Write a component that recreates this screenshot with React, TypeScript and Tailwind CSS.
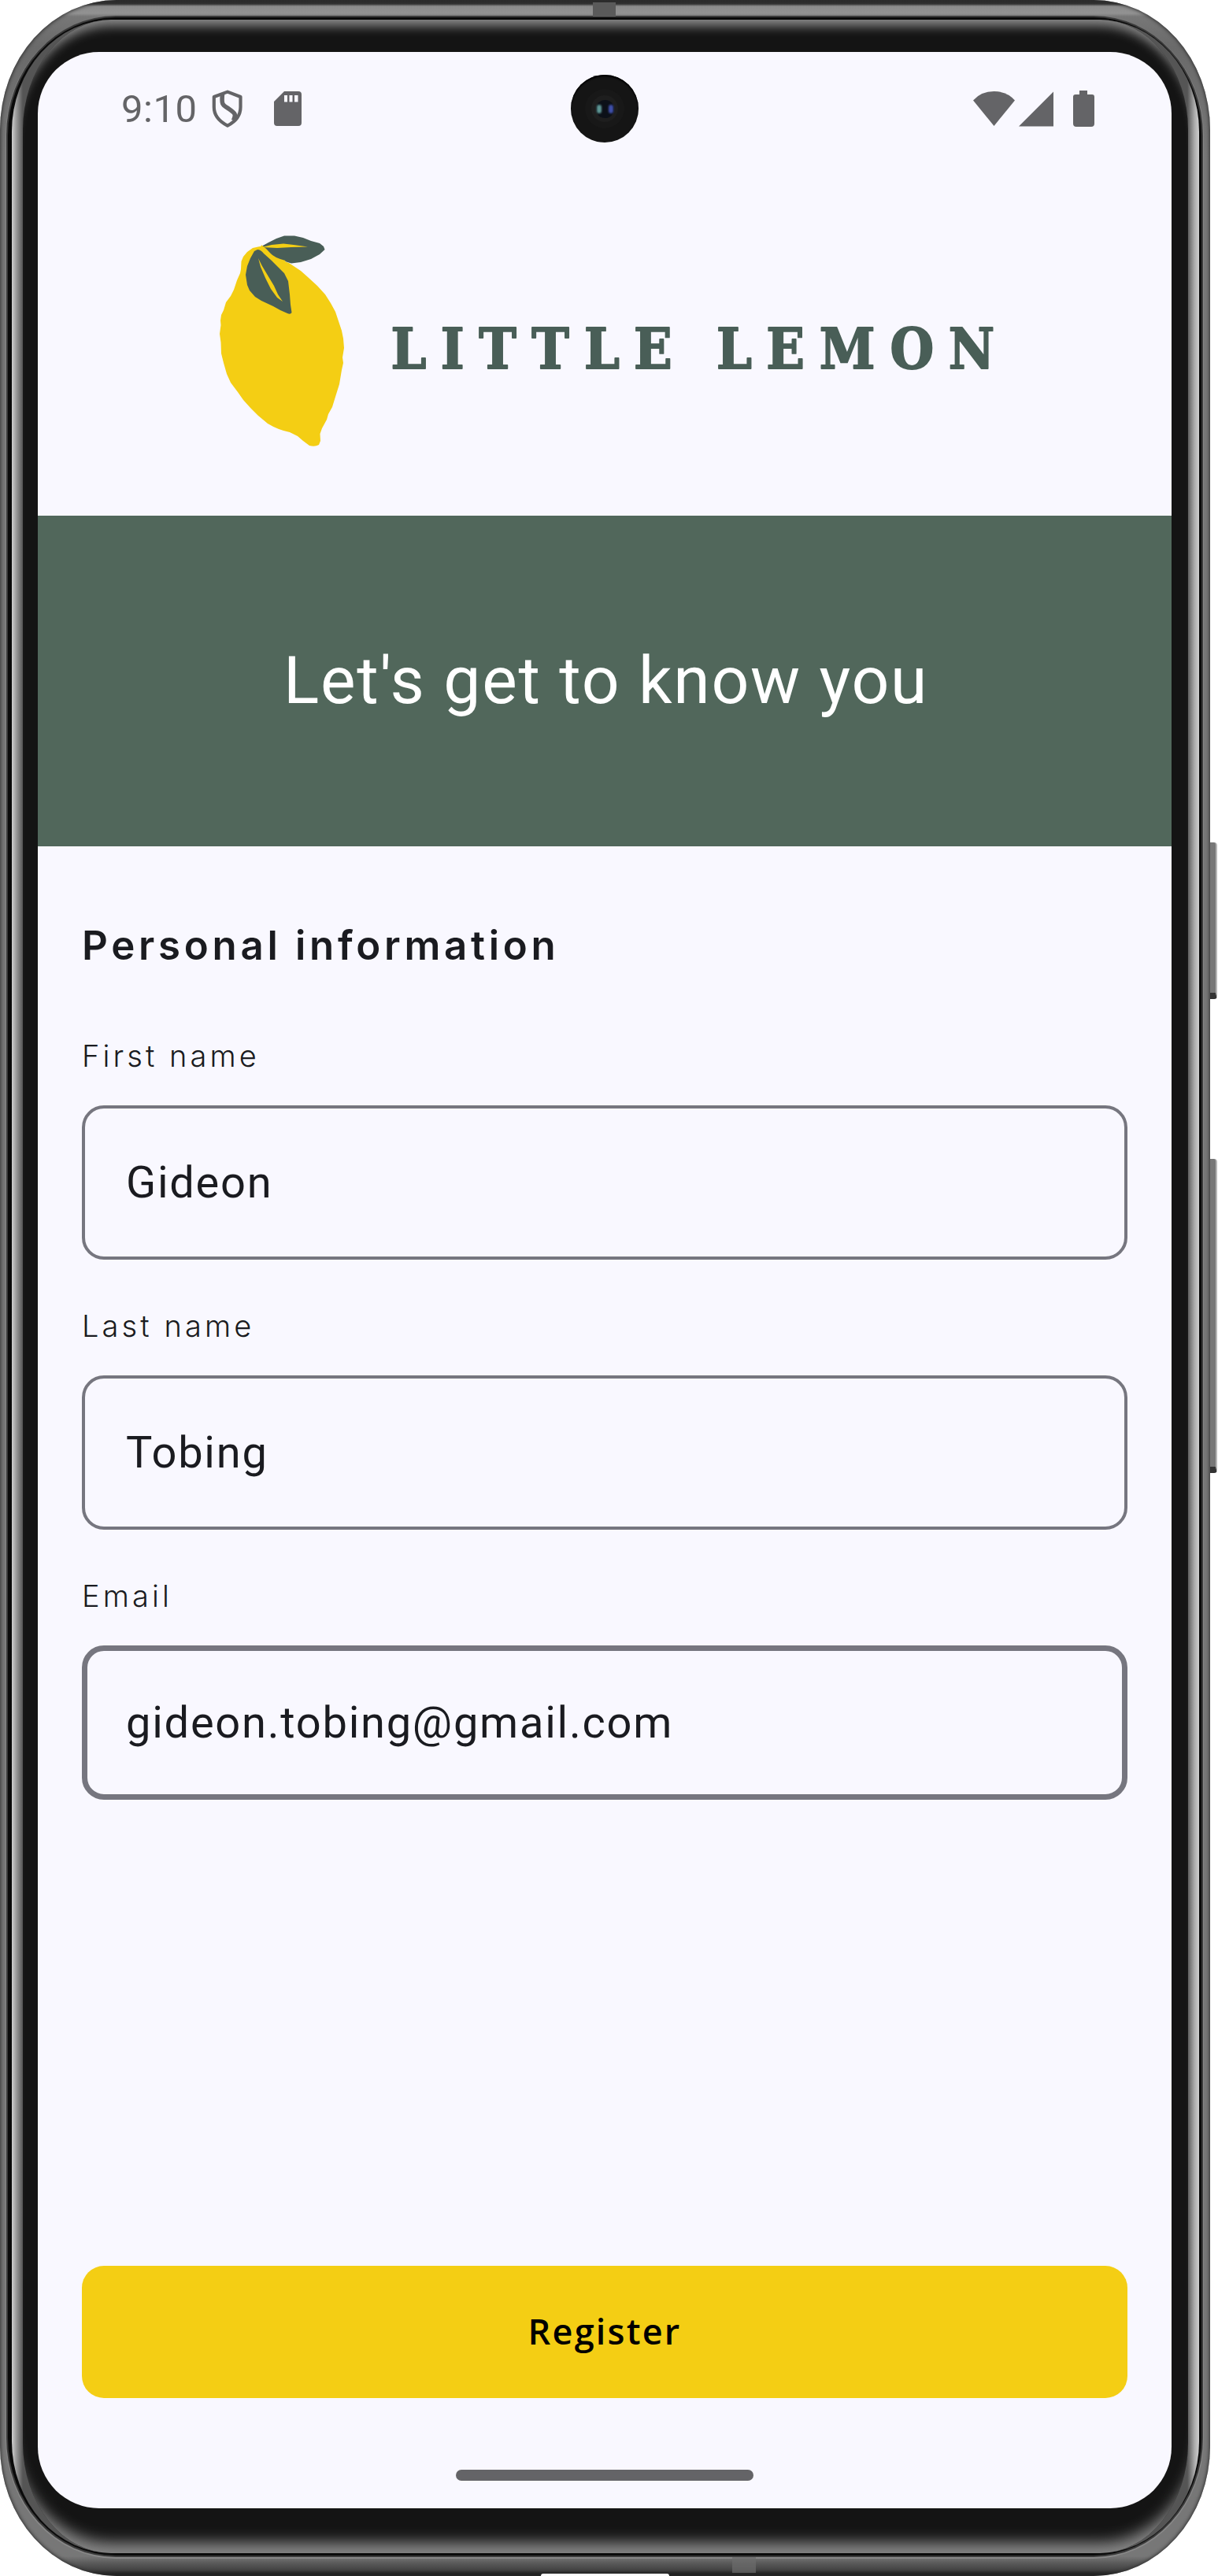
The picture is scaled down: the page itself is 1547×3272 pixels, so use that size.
import React from "react";

const ink = "#1a1b20";

function ShieldIcon() {
  return (
    <svg className="h-[48px] w-[40px]" viewBox="0 0 40 48" fill="none" stroke="#646467" strokeWidth="4.2" strokeLinejoin="round">
      <path d="M20 2.6 L36.5 9 V22 C36.5 33 29 41 20 45.6 C11 41 2.8 33 2.8 22 V9 Z" />
      <path d="M13.5 5.5 C12 20 14 19 22 24.5 C30 30 31 31 27.5 39" strokeWidth="5.6" />
    </svg>
  );
}

function SdCardIcon() {
  return (
    <svg className="h-[44px] w-[35px]" viewBox="0 0 35 44" fill="#646467">
      <path fillRule="evenodd" d="M13 0 H31 Q35 0 35 4 V40 Q35 44 31 44 H4 Q0 44 0 40 V13 Z M13 5 V13.5 H17 V5 Z M19.5 5 V13.5 H23.5 V5 Z M26 5 V13.5 H30.5 V5 Z" />
    </svg>
  );
}

function StatusBar() {
  return (
    <div className="flex h-[144px] items-center justify-between pr-[98px] pl-[106px]">
      <div className="flex items-center">
        <span className="w-[115px] text-[49px] leading-none tracking-[0.5px] text-[#646467]">9:10</span>
        <ShieldIcon />
        <span className="w-[39px]" />
        <SdCardIcon />
      </div>
      <svg className="h-[46px] w-[154px]" viewBox="0 0 154 46" fill="#646467">
        <path d="M0 12.5 Q10 1 26.5 1 Q43 1 53 12.5 L26.5 45 Z" />
        <path d="M102 1.5 V45.5 H58 Z" />
        <path d="M135 0 H145 V5 H151 Q154 5 154 8 V42 Q154 46 150 46 H131 Q127 46 127 42 V8 Q127 5 130 5 H135 Z" />
      </svg>
    </div>
  );
}

function Camera() {
  return (
    <div className="absolute top-[29px] left-[677px] flex size-[86px] items-center justify-center rounded-full bg-[#151515] shadow-[inset_0_2px_2px_#000]">
      <div className="flex size-[50px] items-center justify-center rounded-full bg-[#181818]">
        <div className="flex size-[34px] items-center justify-center rounded-full bg-[#1e1e1e]">
          <div className="flex size-[23px] items-center justify-between rounded-full bg-[#0c1018] px-px">
            <span className="h-[11px] w-[6px] rounded-full bg-[#5e9794] blur-[1px]" />
            <span className="h-[11px] w-[6px] rounded-full bg-[#3f4fa8] blur-[1px]" />
          </div>
        </div>
      </div>
    </div>
  );
}

function Logo() {
  return (
    <svg className="h-[300px] w-[1000px]" viewBox="268 280 1000 300">
      <path
        fill="#f4ce14"
        d="M330 313 L321 315 L314 320 L309 326 L306.500 332 L306 342 L305 347 L301 356 L297 368 L293 376 L287 384 L284 394 L281 400 L280 407 L280.500 413 L279 424 L280.500 435 L281 449 L284 461 L288 475 L293 486 L302 498 L309 508 L318 518 L328 528 L340 538 Q353 546 368 549 L378 554 L385 560 L393 566 Q400 568 405 565 L407 560 L406.500 551 L409 544 L415 533 L417 526 L422 517 L426 504 L431 488 L434 470 L436 461 L435 454 L437 442 L436 430 L434 420 L430 408 L426 396 L420 385 L413 374 L403 363 L391 352 L382 344 L367 334 L350 328 L338 316 Z"
      />
      <path fill="#495e57" d="M332 313 L341 308 L351 303 L361 299.500 L374 299.500 L385 302 L395 306 L406 309 L411 313 L412.500 317 L406 323 L395 329 L382 333 L370 334.500 L359 331 L347 327 L336 315 Z" />
      <path fill="none" stroke="#f4ce14" strokeWidth="4" d="M331 313 Q338 318 342 323 Q347 329 362 333" />
      <path fill="#f4ce14" d="M333 314 L345 311 L360 309.500 L373 311 L391 313.500 L370 314 L352 315 Z" />
      <path fill="#495e57" d="M327 317 Q331 317 335 322 L345 331 L354 340 L361 347 L366 357 L368 374 L369 387 L370.500 397 Q369 400 365 398 L356 394 L347 389 L332 382 L324 377 L317 369 L314 362 L312 349 L314 338 L318 328 L323 319 Z" />
      <path fill="#f4ce14" d="M328 328 L333 338 L342 353 L348 363 L353 374 L359 383 L352 378 L344 367 L337 353 L331 339 Z" />
      <text
        x="519 574.6 632 699 764.500 829.4 882 932.4 997.7 1076 1158.3 1234"
        y="468"
        textAnchor="middle"
        fill="#495e57"
        stroke="#495e57"
        strokeWidth="1.8"
        strokeLinejoin="round"
        fontSize="71"
        fontWeight="700"
        style={{ fontFamily: '"DejaVu Serif Condensed","DejaVu Serif",serif', fontStretch: "condensed" }}
      >
        LITTLE LEMON
      </text>
    </svg>
  );
}

function Field({ label, value, strong }: { label: string; value: string; strong?: boolean }) {
  return (
    <div className="flex h-[343px] flex-col">
      <label className="h-[93px] pt-[10px] font-[Inter,sans-serif] text-[38px] leading-[40px] font-[350] tracking-[4.1px]">{label}</label>
      <div
        className={
          strong
            ? "flex h-[196px] items-center rounded-[28px] border-[7px] border-[#76767f] pl-[49px]"
            : "flex h-[196px] items-center rounded-[28px] border-4 border-[#76767f] pl-[52px]"
        }
      >
        <span className="text-[56px] leading-none tracking-[1.75px]">{value}</span>
      </div>
    </div>
  );
}

function Screen() {
  return (
    <main className="relative flex h-[3120px] w-[1440px] flex-col overflow-hidden rounded-[78px] bg-[#f9f8ff]" style={{ color: ink }}>
      <StatusBar />
      <Camera />
      <header className="flex h-[445px] justify-center pt-[70px]">
        <Logo />
      </header>
      <section className="flex h-[420px] items-center justify-center bg-[#51675b] pl-[3px] text-[84px] leading-none tracking-[1.75px] text-white">
        Let&apos;s get to know you
      </section>
      <section className="flex flex-1 flex-col px-[56px]">
        <h1 className="mt-[98px] h-[56px] font-[Inter,sans-serif] text-[51px] leading-[56px] font-semibold tracking-[4.7px]">Personal information</h1>
        <form className="mt-[82px]">
          <Field label="First name" value="Gideon" />
          <Field label="Last name" value="Tobing" />
          <Field label="Email" value="gideon.tobing@gmail.com" strong />
        </form>
      </section>
      <footer className="flex flex-col items-center px-[56px] pb-[35px]">
        <button className="h-[168px] w-full rounded-[28px] bg-[#f4ce14] pb-[2px] font-['Open_Sans',sans-serif] text-[45px] font-[650] tracking-[2.2px] text-black">Register</button>
        <span className="mt-[91px] h-[14px] w-[378px] rounded-full bg-[#646467]" />
      </footer>
    </main>
  );
}

export default function App() {
  return (
    <div className="relative h-[3272px] w-[1547px] overflow-hidden bg-white font-[Roboto,sans-serif]">
      <span className="absolute top-[1070px] left-[1533px] h-[199px] w-[13px] rounded-[4px] border-r-2 border-b-8 border-r-[#b5b5b5] border-b-[#333] bg-[#777]" />
      <span className="absolute top-[1472px] left-[1533px] h-[399px] w-[13px] rounded-[4px] border-r-2 border-b-8 border-r-[#b5b5b5] border-b-[#333] bg-[#777]" />
      <div className="relative h-[3272px] w-[1537px] rounded-[148px/165px] bg-[linear-gradient(to_bottom,#222_0,#333_5px,#8c8c8c_8px,#929292_17px,#777_21px,#6a6a6a_60px,#777_200px,#777_3080px,#777_3247px,#5c5c5c_3255px,#444_3264px,#151515_3271px)] pt-[22px] pr-[11px] pb-[26px] pl-[10px] shadow-[inset_0_0_4px_1px_#333]">
        <span className="absolute top-[3px] left-[753px] h-[18px] w-[29px] bg-[#5a5a5a]" />
        <span className="absolute bottom-[4px] left-[930px] h-[20px] w-[30px] bg-[#6c6c6c]/70" />
        <span className="absolute bottom-0 left-[687px] h-[3px] w-[163px] rounded-t-full bg-white" />
        <div className="h-full w-full rounded-[137px/150px] bg-[#0a0a0a] pt-[3px] pr-[3px] pb-[3px] pl-[5px] shadow-[0_0_0_2px_#3a3a3a,0_1px_0_3px_#888]">
          <div className="h-full w-full rounded-[128px/142px] bg-[linear-gradient(to_right,#d0d0d0_0,#a0a0a0_5px,#555_14px,#555_1493px,#aaa_1502px,#d0d0d0_1508px)] px-[14px]">
            <div className="h-full w-full rounded-[112px/140px] bg-[#141414] px-[19px] pt-[41px] shadow-[inset_0_20px_14px_-12px_#8a8a8a,inset_0_-30px_18px_-16px_#858585]">
              <Screen />
            </div>
          </div>
        </div>
      </div>
    </div>
  );
}
